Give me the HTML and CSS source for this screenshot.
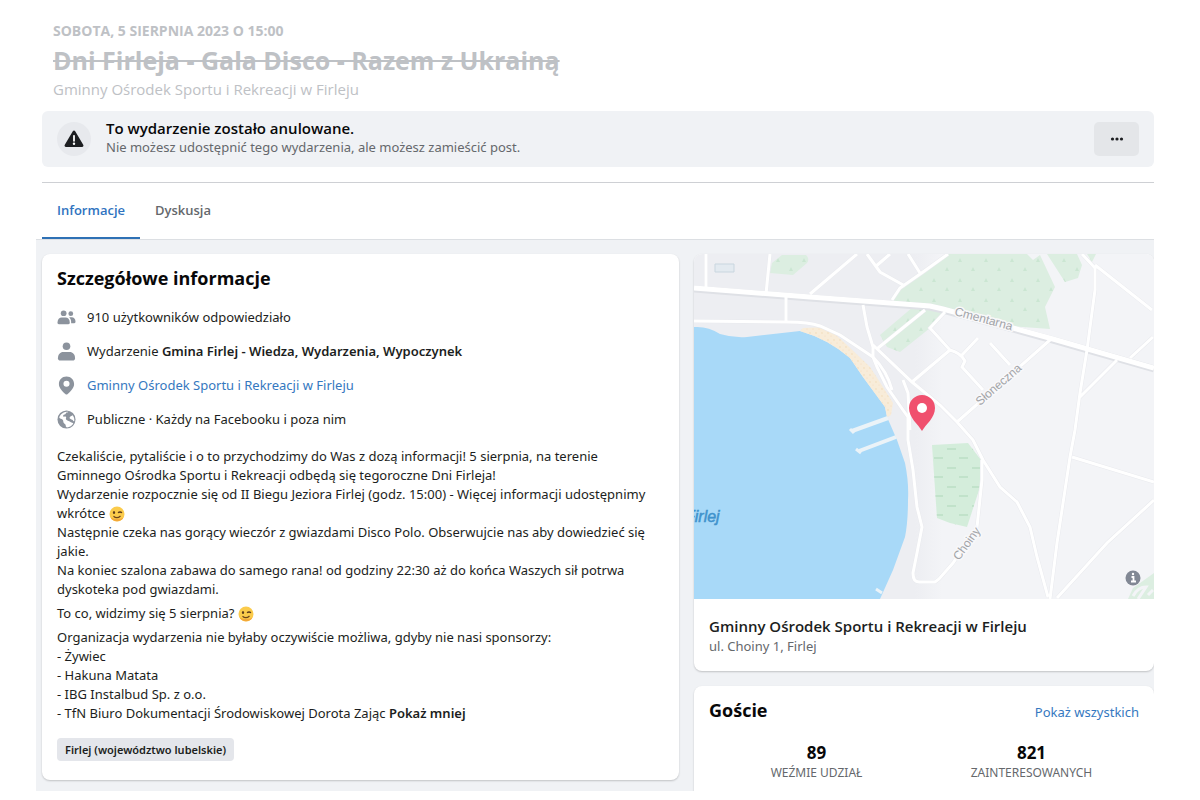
FILE: index.html
```
<!DOCTYPE html>
<html lang="pl">
<head>
<meta charset="utf-8">
<title>Dni Firleja - Gala Disco - Razem z Ukrainą</title>
<link rel="stylesheet" href="styles.css">
</head>
<body>
<svg class="defs" aria-hidden="true">
  <symbol id="wink" viewBox="0 0 16 16">
    <circle cx="8" cy="8" r="7.5" fill="#fbcb4b"/>
    <path d="M1.500 11.500a7.500 7.500 0 0 0 13 0q-6 3-13 0z" fill="#f3a83a"/>
    <ellipse cx="5" cy="6.500" rx="1.100" ry="1.500" fill="#5b3b1b"/>
    <path d="M9 6.800q2-1.600 4 0" fill="none" stroke="#5b3b1b" stroke-width="1.300"/>
    <path d="M4.500 10.300q3.500 3 7-.300" fill="none" stroke="#6d431b" stroke-width="1.200"/>
  </symbol>
</svg>
<main class="page">
  <header class="event-header">
    <p class="event-date">SOBOTA, 5 SIERPNIA 2023 O 15:00</p>
    <h1 class="event-title">Dni Firleja - Gala Disco - Razem z Ukrainą</h1>
    <p class="event-place">Gminny Ośrodek Sportu i Rekreacji w Firleju</p>
  </header>

  <section class="notice">
    <span class="notice-icon">
      <svg viewBox="0 0 20 18" width="20" height="18"><path d="M8.800 1.200a1.400 1.400 0 0 1 2.400 0l8 13.600a1.400 1.400 0 0 1-1.200 2.200H2a1.400 1.400 0 0 1-1.200-2.200z" fill="#1c1e21"/><path d="M10 5.800v5" stroke="#fff" stroke-width="1.800" stroke-linecap="round"/><circle cx="10" cy="13.800" r="1.200" fill="#fff"/></svg>
    </span>
    <div class="notice-text">
      <h2 class="notice-title">To wydarzenie zostało anulowane.</h2>
      <p class="notice-sub">Nie możesz udostępnić tego wydarzenia, ale możesz zamieścić post.</p>
    </div>
    <button class="more" type="button" aria-label="Więcej">
      <svg viewBox="0 0 14 4" width="14" height="4" fill="#1c1e21"><circle cx="2.500" cy="2" r="1.600"/><circle cx="7" cy="2" r="1.600"/><circle cx="11.500" cy="2" r="1.600"/></svg>
    </button>
  </section>

  <nav class="tabs">
    <a class="tab tab-active" href="#informacje">Informacje</a>
    <a class="tab" href="#dyskusja">Dyskusja</a>
  </nav>

  <div class="content">
    <section class="card details" id="informacje">
      <h2 class="card-title">Szczegółowe informacje</h2>
      <ul class="facts">
        <li class="fact">
          <svg class="fact-icon" viewBox="0 0 20 20"><circle cx="7" cy="5.500" r="3"/><circle cx="14.500" cy="6" r="2.500"/><path d="M.500 15.500c0-3.500 2-5.500 4.500-5.500h4c2.500 0 4.500 2 4.500 5.500 0 .800-.500 1.500-1.500 1.500H2C1 17 .500 16.300.500 15.500z"/><path d="M12.800 9.800h2.700c2.300 0 4 1.800 4 4.700 0 .900-.500 1.500-1.300 1.500h-3.300c.200-2.600-.500-4.600-2.100-6.200z"/></svg>
          <span>910 użytkowników odpowiedziało</span>
        </li>
        <li class="fact">
          <svg class="fact-icon" viewBox="0 0 20 20"><circle cx="10" cy="4.500" r="4"/><path d="M1 17c0-4 2.500-6.500 5.500-6.500h7c3 0 5.500 2.500 5.500 6.500 0 1.500-1 2.500-2.500 2.500h-13C2 19.500 1 18.500 1 17z"/></svg>
          <span>Wydarzenie <strong>Gmina Firlej - Wiedza, Wydarzenia, Wypoczynek</strong></span>
        </li>
        <li class="fact">
          <svg class="fact-icon" viewBox="0 0 20 20"><path fill-rule="evenodd" d="M10 .500c4.700 0 8 3.400 8 7.800 0 4.200-3.200 7.200-6.800 10.700a1.700 1.700 0 0 1-2.400 0C5.200 15.500 2 12.500 2 8.300 2 3.900 5.300.500 10 .500zM10 5a3.200 3.200 0 1 0 0 6.400A3.200 3.200 0 0 0 10 5z"/></svg>
          <a class="link" href="#miejsce">Gminny Ośrodek Sportu i Rekreacji w Firleju</a>
        </li>
        <li class="fact">
          <svg class="fact-icon" viewBox="0 0 20 20"><circle cx="10" cy="10" r="9.500"/><path fill="#fff" d="M12 1.900c-1.500-.300-3.500-.200-5 .600-2.200 1-4 3-4.700 5.200.700 1.800 2.400 1.500 3.700 2.500 1 .900.300 2.200 1 3.200.8 1.100 2 1.200 2.200 2.600-.2 1 .2 1.900 1.300 2.300 2.900-.200 5.400-1.700 6.700-4.200-.500-1-1.700-.600-2.600-1.300-1.500-1.200-3.400-1.500-4.800-2.600-1.200-1.100.4-1.900-.3-2.900-.9-1-2.300.400-3-.8-.3-1.300 1.200-1.700 2.200-1.900 1-.700.300-1.500 1.400-1.900 1.100-.100 1.500-.300 1.900-.800z"/><path fill="#fff" d="M14.500 6.500c-1 .500-1.500 1.500-1 2.500 1 1.200 2.500.700 3.200 1.800.3.800.8 1.200 1.500.700.300-2.500-.500-4.500-1.700-6-.500.500-1.200.600-2 1z"/></svg>
          <span>Publiczne · Każdy na Facebooku i poza nim</span>
        </li>
      </ul>
      <div class="description">
        <p>Czekaliście, pytaliście i o to przychodzimy do Was z dozą informacji! 5 sierpnia, na terenie<br>Gminnego Ośrodka Sportu i Rekreacji odbędą się tegoroczne Dni Firleja!<br>Wydarzenie rozpocznie się od II Biegu Jeziora Firlej (godz. 15:00) - Więcej informacji udostępnimy<br>wkrótce <svg class="emoji"><use href="#wink"/></svg><br>Następnie czeka nas gorący wieczór z gwiazdami Disco Polo. Obserwujcie nas aby dowiedzieć się<br>jakie.<br>Na koniec szalona zabawa do samego rana! od godziny 22:30 aż do końca Waszych sił potrwa<br>dyskoteka pod gwiazdami.</p>
        <p>To co, widzimy się 5 sierpnia? <svg class="emoji"><use href="#wink"/></svg></p>
        <p>Organizacja wydarzenia nie byłaby oczywiście możliwa, gdyby nie nasi sponsorzy:<br>- Żywiec<br>- Hakuna Matata<br>- IBG Instalbud Sp. z o.o.<br>- TfN Biuro Dokumentacji Środowiskowej Dorota Zając <button class="less" type="button">Pokaż mniej</button></p>
      </div>
      <a class="tag" href="#firlej">Firlej (województwo lubelskie)</a>
    </section>

    <aside class="side">
      <section class="card place" id="miejsce">
        <svg class="map" viewBox="0 0 460 345" preserveAspectRatio="xMidYMid slice" role="img" aria-label="Mapa">
          <defs>
            <pattern id="trees" width="26" height="20" patternUnits="userSpaceOnUse"><path d="M4 8l2-4 2 4zM17 17l2-4 2 4z" fill="#cbe6d2"/></pattern>
            <pattern id="grass" width="25" height="19" patternUnits="userSpaceOnUse"><path d="M3 5h9M15 14h9" stroke="#c1e2ca" stroke-width="2"/></pattern>
            <pattern id="sand" width="6" height="7" patternUnits="userSpaceOnUse"><circle cx="2" cy="2" r=".700" fill="#eed7b0"/><circle cx="5" cy="5" r=".600" fill="#f2d9bd"/></pattern>
            <linearGradient id="land"><stop offset=".48" stop-color="#edeef2"/><stop offset=".54" stop-color="#f3f4f7"/></linearGradient>
            <g id="greens">
              <path d="M254 0h79l6 6 7-5 15 32-10 20 5 22-40-3-67-16-51-8 8-14z"/>
              <path d="M353 0l18 28 13-4 4-13-5-11zM393 0h9l-4 8z"/>
              <path d="M186 81l33-28 31 4-14 17-30 24-13-5z"/>
              <path d="M78 9l10-8h24q4 4 1 8l-14 12-23-2z"/>
            </g>
            <g id="roads">
              <path d="M12 0v34M76 0l-4 40M92 43v24M163 0l-47 40M173 0l13 18 25 14M196 0l-15 13M214 0l12 19M198 46l8-12 23-16L254 0"/>
              <path d="M0 67l93 1q22 0 33 4l20 9 33 22M179 103l4 10 10 20 16 23 5 7v23l5 30 4 37 5 20-5 26-4 20q0 9 6 9h16l4-3 14-16 24-36 5-47v-20"/>
              <path d="M169 51l4 22 6 20v10q14 14 19 33M184 94l47-38M179 91l39 37 28 23 17 17 16 18 10 20 17 27 17 15 13 25 7 30 11 40"/>
              <path d="M209 126l5 13 2 37M218 128l38-32-20-22 15-16M256 96q11 3 15 11l-3 6 21 23M268 101l16-17M296 89l20 22M263 168l93-82"/>
              <path d="M388 0l13 14v22l-8 60-7 43-5 37-5 27-13 86-7 56M401 11l57 45M436 104l23-21M423 106l-37 37M378 203l82 25M460 246l-47 43-50 55"/>
            </g>
          </defs>
          <rect width="460" height="345" fill="url(#land)"/>
          <use href="#greens" fill="#dceee1"/>
          <use href="#greens" fill="url(#trees)"/>
          <path d="M238 191l36-2 13 17-1 27-13 40-17-4-13-5z" fill="#d4eddb"/>
          <path d="M238 191l36-2 13 17-1 27-13 40-17-4-13-5z" fill="url(#grass)"/>
          <path d="M434 345l5-11 21-15v26z" fill="#dceee1"/>
          <path d="M439 342q5-9 13-9l-8 12M454 341l5-5" fill="none" stroke="#f3f4f7" stroke-width="3"/>
          <path d="M21 10h19v8H21z" fill="#e3eaf0" stroke="#c9d6df"/>
          <path d="M0 73q14-1 26 7 13 4 27 3l53-6q28 8 50 27l13 19 22 30 2 10 10 23 8 23q4 20 3 37 0 22-3 37l-12 33-13 29H0z" fill="#a8d9f8"/>
          <path d="M106 77l3-3 24-1 20 18 23 22 13 20 10 16-2 12-4 2-2-10-22-30-13-19q-22-19-50-27z" fill="#f8ecd9"/>
          <path d="M106 77l3-3 24-1 20 18 23 22 13 20 10 16-2 12-4 2-2-10-22-30-13-19q-22-19-50-27z" fill="url(#sand)"/>
          <path d="M194 164l-36 13M202 183l-37 14" stroke="#ebf3f8" stroke-width="4"/>
          <path d="M156 175l4 4M162 195l5 4M182 335l6 4" stroke="#ebf3f8" stroke-width="3"/>
          <use href="#roads" fill="none" stroke="#e9eaee" stroke-width="4"/>
          <path d="M0 35l116 9 120 9 13 3 110 30 101 29" fill="none" stroke="#dfe1e6" stroke-width="7"/>
          <use href="#roads" fill="none" stroke="#fff" stroke-width="3"/>
          <path d="M0 34l116 9 120 9 13 3 110 30 101 29" fill="none" stroke="#fff" stroke-width="5"/>
          <g class="map-street">
            <text transform="translate(260 61) rotate(15)">Cmentarna</text>
            <text transform="translate(286 152) rotate(-41)">Słoneczna</text>
            <text transform="translate(265 307) rotate(-54)">Choiny</text>
          </g>
          <text class="map-lake" x="-9" y="268">Firlej</text>
          <path d="M228 177c-4-7-13-13-13-23a13 13 0 0 1 26 0c0 10-9 16-13 23z" fill="#f0506e"/>
          <circle cx="228" cy="154" r="5" fill="#fff"/>
          <circle cx="439" cy="324" r="7.500" fill="#818894"/>
          <path d="M437.500 323h2v4M437 327.500h5" fill="none" stroke="#fff" stroke-width="1.800"/><circle cx="439" cy="320" r="1.200" fill="#fff"/>
        </svg>
        <div class="place-text">
          <h3 class="place-name">Gminny Ośrodek Sportu i Rekreacji w Firleju</h3>
          <p class="place-address">ul. Choiny 1, Firlej</p>
        </div>
      </section>

      <section class="card guests">
        <div class="guests-head">
          <h2 class="card-title">Goście</h2>
          <a class="link" href="#goscie">Pokaż wszystkich</a>
        </div>
        <dl class="counts">
          <div class="count"><dt>WEŹMIE UDZIAŁ</dt><dd>89</dd></div>
          <div class="count"><dt>ZAINTERESOWANYCH</dt><dd>821</dd></div>
        </dl>
      </section>
    </aside>
  </div>
</main>
</body>
</html>
```
FILE: styles.css
```
* { box-sizing: border-box; }
body, h1, h2, h3, p, ul, dl, dd { margin: 0; padding: 0; }
body {
  background: #fff;
  color: #1c1e21;
  font: 13px/19px "Noto Sans", "Open Sans", sans-serif;
}
a { text-decoration: none; }
button { font: inherit; border: 0; padding: 0; color: inherit; }
.defs { display: none; }
.page { padding: 20px 46px 9px 36px; }

.event-header { padding-left: 17px; color: #bec1c5; font-family: "Open Sans", sans-serif; }
.event-date { font-size: 14px; font-weight: 700; line-height: 22px; }
.event-title {
  font-size: 25px;
  font-weight: 700;
  line-height: 36px;
  text-decoration: line-through;
  text-decoration-thickness: 2px;
}
.event-place { font-size: 15px; line-height: 22px; }

.notice {
  display: flex;
  align-items: center;
  gap: 15px;
  min-height: 56px;
  margin: 11px 0 15px 6px;
  padding: 0 15px;
  border-radius: 6px;
  background: #f0f2f5;
}
.notice-icon {
  display: grid;
  place-items: center;
  width: 34px;
  height: 34px;
  border-radius: 50%;
  background: #e7e9ed;
}
.notice-text { flex: 1; padding-bottom: 3px; }
.notice-title { font: 600 15px/20px "Open Sans", sans-serif; color: #080809; }
.notice-sub { line-height: 19px; color: #65686c; }
.more {
  display: grid;
  place-items: center;
  width: 45px;
  height: 34px;
  border-radius: 5px;
  background: #e4e6e9;
}

.tabs {
  display: flex;
  height: 57px;
  margin-left: 6px;
  border-top: 1px solid #ced0d4;
}
.tab {
  display: flex;
  align-items: center;
  padding: 0 15px;
  border-bottom: 2px solid transparent;
  color: #65686c;
  font-family: "Open Sans", sans-serif;
  font-weight: 600;
}
.tab-active { border-color: #2e71b5; color: #2f73c0; }

.content {
  display: grid;
  grid-template-columns: 637fr 460fr;
  gap: 15px;
  align-items: start;
  height: 552px;
  padding: 14px 0 0 6px;
  overflow: hidden;
  background: #f0f2f5;
  border-top: 1px solid #dcdfe3;
}
.card {
  border-radius: 8px;
  background: #fff;
  box-shadow: 0 1px 2px rgba(0, 0, 0, .2);
}
.card-title { font: 700 18px/24px "Open Sans", sans-serif; color: #080809; }
.details { padding: 12px 15px 19px; }
.facts { list-style: none; margin-top: 10px; }
.fact { display: flex; align-items: center; gap: 11px; height: 34px; }
.fact-icon { width: 19px; height: 19px; fill: #8c939d; }
.fact strong { font-weight: 600; }
.link { color: #3578c0; }
.description { display: grid; gap: 5px; margin-top: 11px; }
.emoji { width: 16px; height: 16px; vertical-align: -4px; }
.less { background: none; font-weight: 600; }
.tag {
  display: inline-block;
  margin-top: 15px;
  padding: 0 8px;
  border-radius: 4px;
  background: #e4e6eb;
  color: #1c1e21;
  font-size: 11px;
  font-weight: 600;
  line-height: 23px;
}

.side { display: grid; gap: 15px; }
.place { overflow: hidden; }
.map { display: block; width: 100%; height: 345px; }
.map-street { font: 12px "Liberation Sans", sans-serif; fill: #a2a4a8; stroke: #f8f8fa; stroke-width: 3px; paint-order: stroke; }
.map-lake { font: italic 16px "Liberation Sans", sans-serif; fill: #3f92cc; stroke: #3f92cc; stroke-width: .5px; }
.place-text { padding: 17px 15px 15px; }
.place-name { font: 600 15px/21px "Open Sans", sans-serif; }
.place-address { color: #65686c; }
.guests { height: 120px; padding: 12px 15px; }
.guests-head { display: flex; justify-content: space-between; align-items: baseline; }
.counts { display: grid; grid-template-columns: 1fr 1fr; margin-top: 20px; text-align: center; }
.count { display: flex; flex-direction: column-reverse; }
.count dt { font-size: 12px; line-height: 17px; color: #65686c; }
.count dd { font-size: 17px; font-weight: 700; line-height: 22px; color: #080809; }
```
